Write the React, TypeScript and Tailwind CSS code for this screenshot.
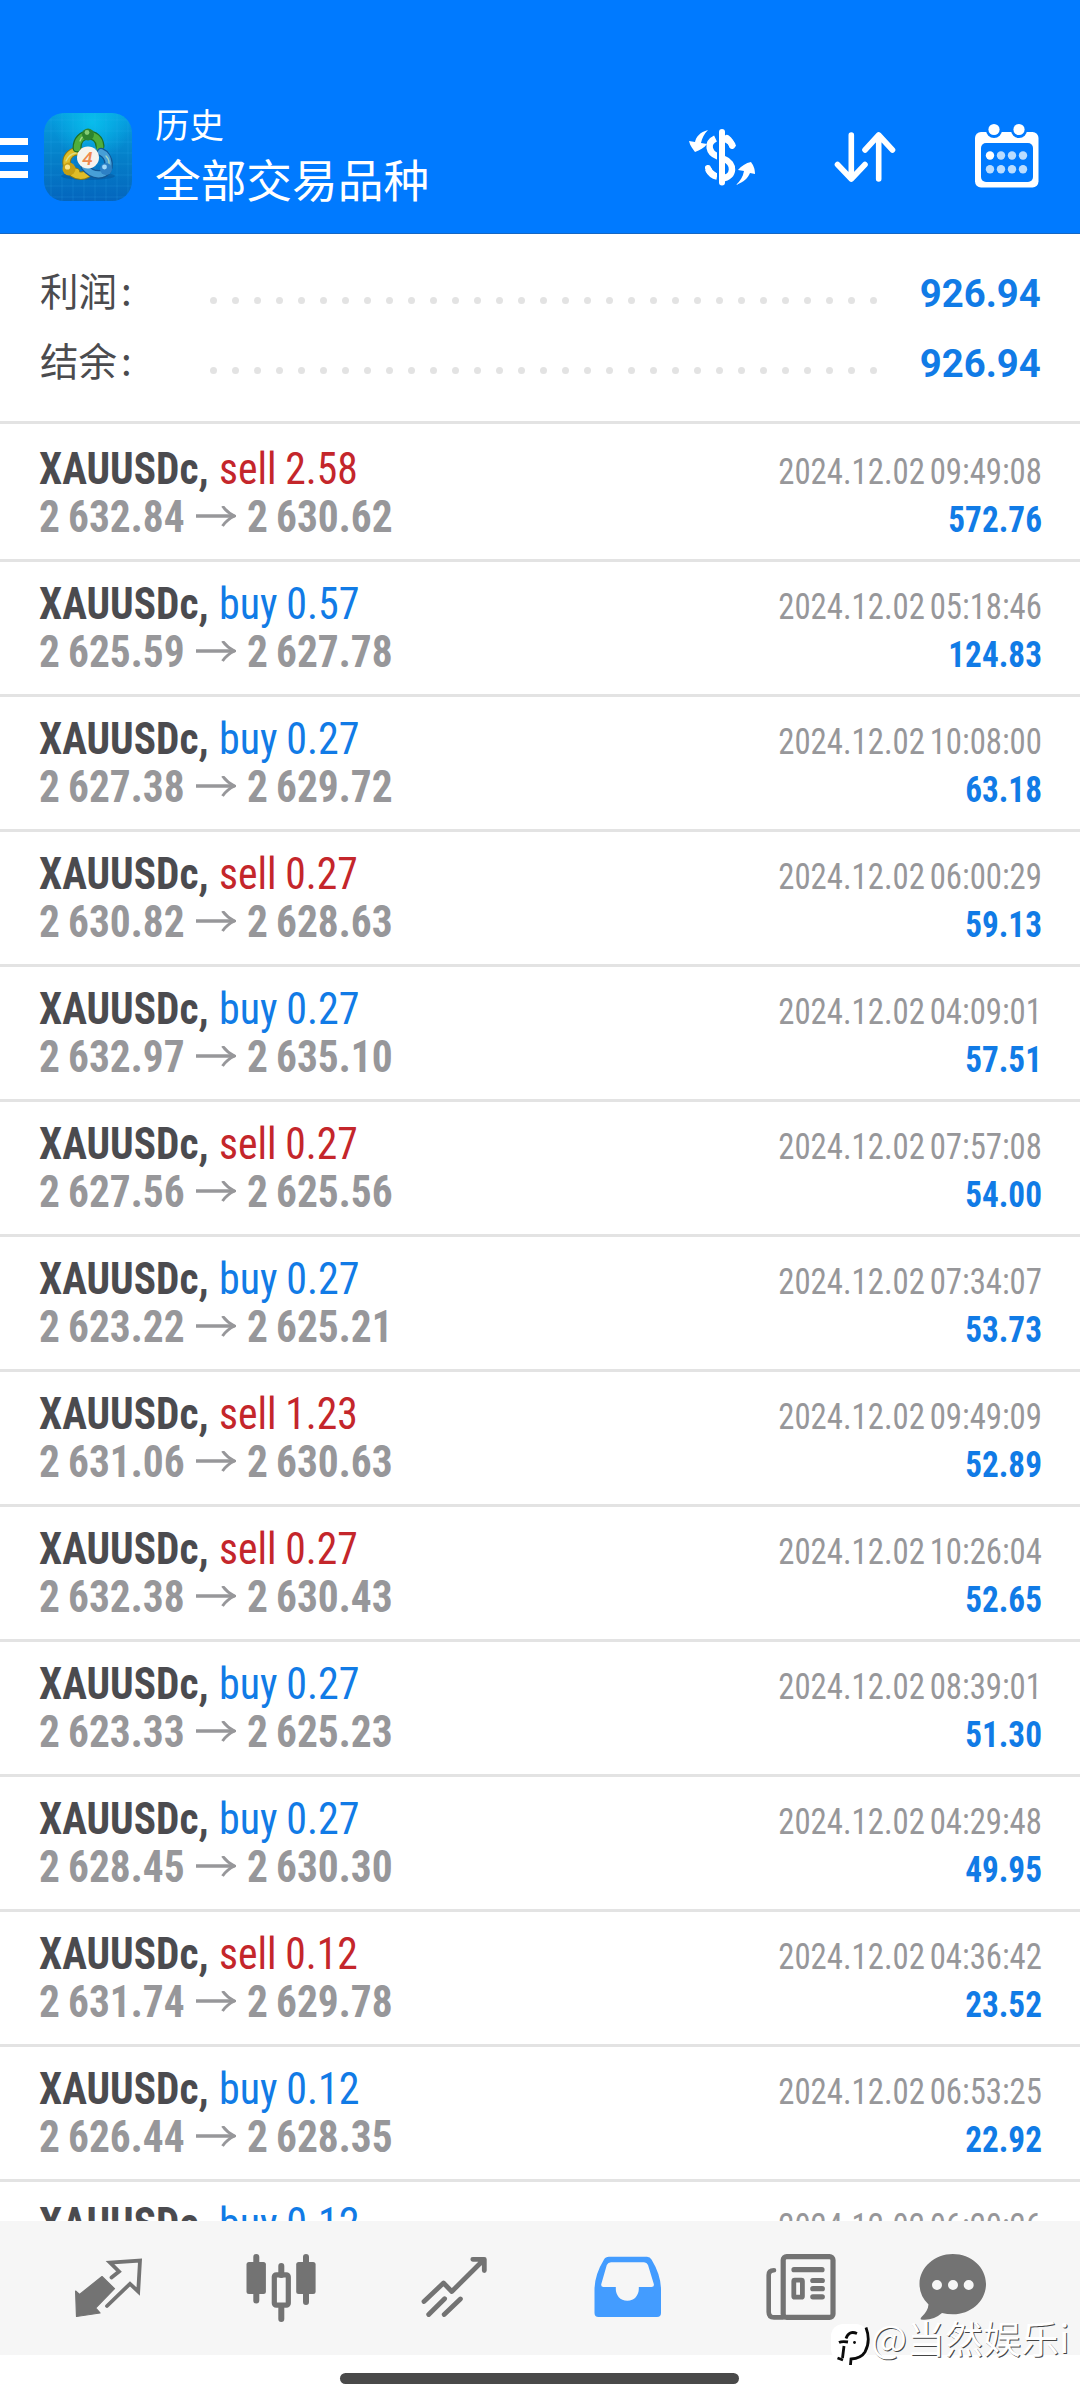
import type { ReactNode } from "react";

type Deal = { side: "buy" | "sell"; lots: string; open: string; close: string; time: string; profit: string };

const deals: Deal[] = [
  { side: "sell", lots: "2.58", open: "2 632.84", close: "2 630.62", time: "2024.12.02 09:49:08", profit: "572.76" },
  { side: "buy", lots: "0.57", open: "2 625.59", close: "2 627.78", time: "2024.12.02 05:18:46", profit: "124.83" },
  { side: "buy", lots: "0.27", open: "2 627.38", close: "2 629.72", time: "2024.12.02 10:08:00", profit: "63.18" },
  { side: "sell", lots: "0.27", open: "2 630.82", close: "2 628.63", time: "2024.12.02 06:00:29", profit: "59.13" },
  { side: "buy", lots: "0.27", open: "2 632.97", close: "2 635.10", time: "2024.12.02 04:09:01", profit: "57.51" },
  { side: "sell", lots: "0.27", open: "2 627.56", close: "2 625.56", time: "2024.12.02 07:57:08", profit: "54.00" },
  { side: "buy", lots: "0.27", open: "2 623.22", close: "2 625.21", time: "2024.12.02 07:34:07", profit: "53.73" },
  { side: "sell", lots: "1.23", open: "2 631.06", close: "2 630.63", time: "2024.12.02 09:49:09", profit: "52.89" },
  { side: "sell", lots: "0.27", open: "2 632.38", close: "2 630.43", time: "2024.12.02 10:26:04", profit: "52.65" },
  { side: "buy", lots: "0.27", open: "2 623.33", close: "2 625.23", time: "2024.12.02 08:39:01", profit: "51.30" },
  { side: "buy", lots: "0.27", open: "2 628.45", close: "2 630.30", time: "2024.12.02 04:29:48", profit: "49.95" },
  { side: "sell", lots: "0.12", open: "2 631.74", close: "2 629.78", time: "2024.12.02 04:36:42", profit: "23.52" },
  { side: "buy", lots: "0.12", open: "2 626.44", close: "2 628.35", time: "2024.12.02 06:53:25", profit: "22.92" },
];

const lastDeal = { side: "buy", lots: "0.12", time: "2024.12.02 06:20:26" };

function AppLogo() {
  return (
    <svg className="ml-4 h-[88px] w-[88px] shrink-0" viewBox="0 0 88 88">
      <defs>
        <linearGradient id="tile" x1="0" y1="0" x2="0" y2="1">
          <stop offset="0" stopColor="#069fe0" />
          <stop offset="0.5" stopColor="#0580c9" />
          <stop offset="1" stopColor="#0465bd" />
        </linearGradient>
        <radialGradient id="glow" cx="0.55" cy="0.1" r="0.45">
          <stop offset="0" stopColor="#08bdec" />
          <stop offset="1" stopColor="#08bdec" stopOpacity="0" />
        </radialGradient>
        <pattern id="mesh" width="11" height="11" patternUnits="userSpaceOnUse">
          <path d="M0 7H11M7 0V11" stroke="#35b5ec" strokeOpacity="0.2" strokeWidth="0.8" />
        </pattern>
      </defs>
      <rect width="88" height="88" rx="20" fill="url(#tile)" />
      <rect width="88" height="88" rx="20" fill="url(#glow)" />
      <rect width="88" height="88" rx="20" fill="url(#mesh)" />
      <ellipse cx="44" cy="63" rx="27" ry="4" fill="#044f94" opacity="0.45" />
      <g strokeLinecap="round" fill="none">
        <path d="M32 59C18 58 20 38 35 38M29 60Q36 65 43 61" stroke="#8a7a12" strokeWidth="8.5" />
        <path d="M32 59C18 58 20 38 35 38M29 60Q36 65 43 61" stroke="#e0bd27" strokeWidth="6.5" />
        <path d="M33 35C33 18 55 18 56 33" stroke="#1e6f25" strokeWidth="9" />
        <path d="M33 35C33 18 55 18 56 33L56 38" stroke="#4fae3b" strokeWidth="6.5" />
        <path d="M41 54Q48 63 58 61C68 58 66 43 57 39" stroke="#125795" strokeWidth="8.5" />
        <path d="M41 54Q48 63 58 61C68 58 66 43 57 39" stroke="#479fd7" strokeWidth="6" />
        <path d="M36 28Q38 22 44 22M22 48Q25 41 32 40M62 43Q67 48 64 54" stroke="#d6f1b4" strokeOpacity="0.65" strokeWidth="1.3" />
      </g>
      <circle cx="44" cy="21.5" r="6" fill="#2d842f" />
      <circle cx="43" cy="19.5" r="2.4" fill="#84cc74" />
      <circle cx="25" cy="56" r="6.5" fill="#c69f13" />
      <circle cx="23.5" cy="54" r="2.6" fill="#f8e58b" />
      <circle cx="62" cy="56" r="6" fill="#2d80c5" />
      <circle cx="60.5" cy="54" r="2.4" fill="#a2d8f8" />
      <circle cx="44" cy="44.5" r="11" fill="#f5f3ee" />
      <text x="43.5" y="51.5" textAnchor="middle" fontFamily="Roboto, sans-serif" fontStyle="italic" fontWeight="500" fontSize="19" fill="#ee8a4e">
        4
      </text>
    </svg>
  );
}

function Dots() {
  return (
    <svg className="h-[7px] w-[667px] shrink-0" viewBox="0 0 667 7">
      {Array.from({ length: 31 }, (_, i) => (
        <circle key={i} cx={3.5 + i * 22} cy="3.5" r="3.5" fill="#e3e3e3" />
      ))}
    </svg>
  );
}

function SummaryRow({ label, value }: { label: string; value: string }) {
  return (
    <div className="flex h-[70px] items-center pl-10">
      <div className="w-[170px] pb-[7px] text-[38.5px] leading-[63px] text-[#4b4b4e] [font-family:'Noto_Sans_CJK_SC',sans-serif]">
        {label}
        <span className="ml-1">:</span>
      </div>
      <div className="flex pt-[15px]">
        <Dots />
      </div>
      <div className="ml-auto mr-[39px] origin-right scale-x-[0.97] pt-[2px] text-[39.5px] font-bold leading-[68px] text-[#117be6] [font-family:Roboto,sans-serif]">
        {value}
      </div>
    </div>
  );
}

function DealTitle({ side, lots }: { side: string; lots: string }) {
  return (
    <div className="flex h-[48px] whitespace-nowrap">
      <span className="w-[180px] origin-left scale-x-[0.94] font-bold text-[#4b4b4f]">XAUUSDc,</span>
      <span
        className={
          side === "buy"
            ? "origin-left scale-x-[0.955] text-[#117be6] [word-spacing:-1px]"
            : "origin-left scale-x-[0.945] text-[#c4262b] [word-spacing:-1px]"
        }
      >
        {side} {lots}
      </span>
    </div>
  );
}

function DealTime({ time }: { time: string }) {
  return <div className="h-[48px] origin-right scale-x-[0.897] text-[#97979a] [word-spacing:-3px]">{time}</div>;
}

function DealRow({ deal }: { deal: Deal }) {
  return (
    <div className="flex h-[135px] shrink-0 justify-between border-b-[3px] border-[#e3e3e3] pl-[39px] pr-[38px] pt-[18px] [font-family:'Roboto_Condensed',Roboto,sans-serif]">
      <div className="text-[44px] leading-[48px]">
        <DealTitle side={deal.side} lots={deal.lots} />
        <div className="flex h-[48px] items-center font-bold text-[#97979a] [word-spacing:-1.5px]">
          <span className="w-[145px] origin-left scale-x-[0.94] whitespace-nowrap">{deal.open}</span>
          <svg className="ml-3 mr-[11px] h-[22px] w-10 shrink-0" viewBox="0 0 40 22" fill="none" stroke="#97979a">
            <path d="M0 10H38.5" strokeWidth="3.6" />
            <path d="M26.5 0Q31 6.5 38.5 10Q31 13.5 26.5 20" strokeWidth="3" />
          </svg>
          <span className="origin-left scale-x-[0.94] whitespace-nowrap">{deal.close}</span>
        </div>
      </div>
      <div className="pt-[3px] text-right text-[36.5px] leading-[48px]">
        <DealTime time={deal.time} />
        <div className="h-[48px] origin-right scale-x-[0.91] font-bold text-[#117be6]">{deal.profit}</div>
      </div>
    </div>
  );
}

function NavIcon({ box, className, children }: { box: string; className: string; children: ReactNode }) {
  return (
    <svg className={className} viewBox={box} fill="none" stroke="#737373" strokeLinecap="round" strokeLinejoin="round">
      {children}
    </svg>
  );
}

export default function App() {
  return (
    <div className="relative flex h-[2400px] w-[1080px] flex-col overflow-hidden bg-white">
      <header className="flex h-[234px] shrink-0 items-start border-b border-[#1567c4] bg-[#007aff] pt-[113px] text-white">
        <div className="mt-[25px] flex w-7 flex-col gap-[9.5px]">
          <div className="h-[7px] bg-white" />
          <div className="h-[7px] bg-white" />
          <div className="h-[7px] bg-white" />
        </div>
        <AppLogo />
        <div className="ml-[23px] mt-[-16px] [font-family:'Noto_Sans_CJK_SC',sans-serif]">
          <div className="h-[52px] text-[34.5px] leading-[52px]">历史</div>
          <div className="h-[60px] whitespace-nowrap text-[45.7px] leading-[59px]">全部交易品种</div>
        </div>
        <svg className="ml-auto mr-10 mt-[9px] h-[66px] w-[352px]" viewBox="688 122 352 66" fill="none" stroke="#fff" strokeLinecap="round">
          <path d="M722 132V182.5" strokeWidth="6" />
          <path d="M733 147C731 139 722 138 718 138.5M715.5 138.5C706 143 709 153 717 156L724 159C735 163 735 177 722 178.5M708 169C711 175 714 176 717 176.5" strokeWidth="6.5" strokeLinecap="butt" />
          <path d="M708 168C709 172 712 174 714 175M727 138Q731 141 732 146" strokeWidth="6" />
          <path d="M718 130V186" stroke="#007aff" strokeWidth="2" />
          <path d="M708 130C700 132 696 137 695 142L689 141C690 146 693 149 695 152C700 150 704 148 707 144L701 143C702 138 704 134 708 130Z" fill="#fff" stroke="none" />
          <path d="M736 185C744 182 748 178 750 173L755 174C755 168 753 165 751 162C746 163 741 166 738 170L744 171C743 177 740 181 736 185Z" fill="#fff" stroke="none" />
          <path d="M851.3 135V179M837.5 164.5L851.3 179L865 164.5M878.7 179V135M865 150L878.7 135L892.5 150" strokeWidth="5.6" strokeLinejoin="round" />
          <rect x="975" y="132" width="63.5" height="55.5" rx="6" fill="#fff" stroke="none" />
          <rect x="981" y="143" width="52" height="39" rx="5" fill="#007aff" stroke="none" />
          <circle cx="994" cy="130" r="8" fill="#007aff" stroke="none" />
          <circle cx="1019" cy="130" r="8" fill="#007aff" stroke="none" />
          <circle cx="994" cy="129.5" r="5.6" fill="#fff" stroke="none" />
          <circle cx="1019" cy="129.5" r="5.6" fill="#fff" stroke="none" />
          {[990, 1001, 1012, 1023].map((x) => (
            <g key={x} fill="#b9dcff" stroke="none">
              <circle cx={x} cy="155.5" r="4.2" fill={x === 990 ? "#fff" : "#b9dcff"} />
              <circle cx={x} cy="169.3" r="4.2" />
            </g>
          ))}
        </svg>
      </header>

      <section className="flex h-[190px] shrink-0 flex-col border-b-[3px] border-[#e3e3e3] pt-[24px]">
        <SummaryRow label="利润" value="926.94" />
        <SummaryRow label="结余" value="926.94" />
      </section>

      <main className="flex h-[1797px] shrink-0 flex-col overflow-hidden pt-[3px]">
        {deals.map((d, i) => (
          <DealRow key={i} deal={d} />
        ))}
        <div className="flex shrink-0 justify-between pl-[39px] pr-[38px] pt-[18px] [font-family:'Roboto_Condensed',Roboto,sans-serif]">
          <div className="text-[44px] leading-[48px]">
            <DealTitle side={lastDeal.side} lots={lastDeal.lots} />
          </div>
          <div className="pt-[3px] text-[36.5px] leading-[48px]">
            <DealTime time={lastDeal.time} />
          </div>
        </div>
      </main>

      <nav className="flex h-[134px] shrink-0 items-start bg-[#f6f6f6] pt-[27px]">
        <NavIcon box="70 2248 80 80" className="ml-[70px] h-20 w-20">
          <path d="M75.6 2291L79.5 2294.5L102 2276.5L114.5 2288.7L95.6 2308L100 2313L76.5 2316.5Z" fill="#737373" strokeWidth="1.2" />
          <path d="M111.5 2277.5L119 2271.5L110 2262.7L140 2260.5L138.2 2291.5L130 2283.8L107 2306" strokeWidth="3.8" strokeLinejoin="miter" />
        </NavIcon>
        <NavIcon box="240 2248 80 80" className="ml-[90px] h-20 w-20">
          <path d="M256.3 2257V2300.5M281.3 2266V2275M281.3 2308V2319M306 2257V2302" strokeWidth="6" />
          <rect x="246.5" y="2262" width="19.4" height="32" rx="2.5" fill="#737373" stroke="none" />
          <rect x="274.3" y="2274.8" width="14" height="30.4" rx="2" strokeWidth="5.2" />
          <rect x="296.2" y="2262" width="19.4" height="32" rx="2.5" fill="#737373" stroke="none" />
        </NavIcon>
        <NavIcon box="415 2248 80 80" className="ml-[95px] h-20 w-20">
          <path d="M424 2301.5L443.5 2283L451.8 2291.5L484 2259.5M472.8 2259.3H484.3V2270.5M428.7 2314.5L444.6 2298.8M444.2 2314.5L460.4 2299" strokeWidth="4.8" />
        </NavIcon>
        <NavIcon box="588 2248 80 80" className="ml-[93px] h-20 w-20">
          <path fillRule="evenodd" stroke="none" fill="#439cff" d="M609 2256.7H647Q650 2256.7 651.5 2259.5Q661 2275 661 2290V2313Q661 2317 657 2317H598.5Q594.5 2317 594.5 2313V2290Q594.5 2275 604 2259.5Q605.5 2256.7 609 2256.7ZM611 2262.3Q608 2262.3 606.8 2265L601.3 2284Q600.7 2287 603.5 2287H615.8V2289C615.8 2295 620 2300.8 627.4 2300.8C634.5 2300.8 638.8 2295 638.8 2289V2287H651.5Q654.5 2287 653.8 2284L648 2265Q646.8 2262.3 644 2262.3Z" />
        </NavIcon>
        <NavIcon box="760 2248 80 80" className="ml-[92px] h-20 w-20">
          <rect x="783.2" y="2256.6" width="49.8" height="60.8" rx="3.5" strokeWidth="5.2" />
          <path d="M774 2270.2C770 2270.2 768.7 2272 768.7 2275V2312Q768.7 2317.4 774 2317.4H783" strokeWidth="4.6" />
          <path d="M794 2269.7H822M812.8 2280.5H822.3M812.8 2288.7H822.3M812.8 2296.8H822.3" strokeWidth="5.2" />
          <rect x="793.8" y="2280.2" width="8.6" height="17" rx="1" strokeWidth="4.8" />
        </NavIcon>
        <NavIcon box="912 2248 80 80" className="ml-[72px] h-20 w-20">
          <path d="M952.8 2254C971 2254 986 2267 986 2284C986 2301 971 2314.3 953 2314.3Q947 2314.3 942 2313Q933 2321 921 2319.5Q920 2319 921.5 2317Q928 2311 928.5 2304.5Q919.5 2296 919.5 2284C919.5 2267 935 2254 952.8 2254Z" fill="#737373" stroke="none" />
          <path d="M937 2285H937.01M953 2285H953.01M968.7 2285H968.71" stroke="#f6f6f6" strokeWidth="10" />
        </NavIcon>
      </nav>

      <div className="flex h-[45px] shrink-0 pl-[340px] pt-[18px]">
        <div className="h-[11px] w-[399px] rounded-full bg-[#494949]" />
      </div>

      <div className="absolute left-[831px] top-[2307px] flex items-center">
        <svg className="mt-[6px] h-[54px] w-[40px]" viewBox="831 2309 40 54" fill="none">
          <rect x="831" y="2320" width="37" height="37" rx="12" fill="#fff" />
          <path d="M857 2329.5Q849 2326 846 2334.5M839 2338.5Q842 2337 848 2338M844 2342L842.5 2354M837.5 2354L843 2356" stroke="#0a0a0a" strokeWidth="2.8" />
          <path d="M866 2323.5Q871 2337 865 2348Q861 2354.5 851 2355L850.5 2361" stroke="#0a0a0a" strokeWidth="2.8" />
          <circle cx="854.5" cy="2338.5" r="1.4" fill="#0a0a0a" />
        </svg>
        <span className="whitespace-nowrap text-[38px] leading-[54px] text-white [font-family:'Noto_Sans_CJK_SC',sans-serif] [text-shadow:1px_1px_0_#444]">@当然娱乐i</span>
      </div>
    </div>
  );
}
